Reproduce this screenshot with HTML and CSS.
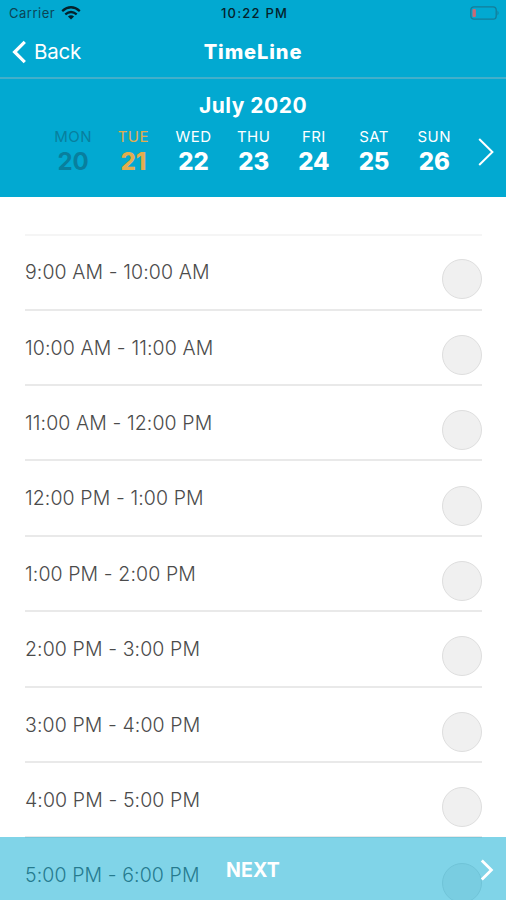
FILE: index.html
```html
<!DOCTYPE html>
<html lang="en">
<head>
<meta charset="utf-8">
<title>TimeLine</title>
<link rel="stylesheet" href="styles.css">
</head>
<body>
<div class="screen">
  <div class="status">
    <div class="carrier"><span class="carrier-name">Carrier</span>
      <svg width="20" height="14" viewBox="0 0 20 14" fill="none" stroke="#05222b" stroke-width="2.3"><path d="M1.2 5.1Q10-2.5 18.8 5.1M4.3 8.3Q10 3.6 15.7 8.3"/><path d="M6.9 10.4Q10 8 13.1 10.4L10 13.4Z" fill="#05222b" stroke="none"/></svg>
    </div>
    <span class="clock">10:22 PM</span>
    <svg class="battery" width="30" height="14" viewBox="0 0 30 14"><rect x=".8" y=".8" width="25.4" height="12.4" rx="3.2" fill="none" stroke="#147d99" stroke-width="1.3"/><path d="M27.5 4.5Q29.7 7 27.5 9.5Z" fill="#147d99"/><rect x="2.5" y="3" width="3.4" height="8" rx="1" fill="#c96a76"/></svg>
  </div>
  <header class="nav">
    <div class="back"><svg width="15" height="24" viewBox="0 0 15 24" fill="none" stroke="#fff" stroke-width="3.2"><path d="M12.8 1.8 2.6 12 12.8 22.2"/></svg><span>Back</span></div>
    <h1>TimeLine</h1>
  </header>
  <section class="calendar">
    <h2>July 2020</h2>
    <div class="week">
      <div class="day past"><span>MON</span><b>20</b></div>
      <div class="day today"><span>TUE</span><b>21</b></div>
      <div class="day"><span>WED</span><b>22</b></div>
      <div class="day"><span>THU</span><b>23</b></div>
      <div class="day"><span>FRI</span><b>24</b></div>
      <div class="day"><span>SAT</span><b>25</b></div>
      <div class="day"><span>SUN</span><b>26</b></div>
      <svg class="next-week" width="16" height="28" viewBox="0 0 16 28" fill="none" stroke="#fff" stroke-width="2"><path d="M1.2 1 14.4 14 1.2 27"/></svg>
    </div>
  </section>
  <main class="slots">
    <div class="slot"><span>9:00 AM - 10:00 AM</span><i></i></div>
    <div class="slot"><span>10:00 AM - 11:00 AM</span><i></i></div>
    <div class="slot"><span>11:00 AM - 12:00 PM</span><i></i></div>
    <div class="slot"><span>12:00 PM - 1:00 PM</span><i></i></div>
    <div class="slot"><span>1:00 PM - 2:00 PM</span><i></i></div>
    <div class="slot"><span>2:00 PM - 3:00 PM</span><i></i></div>
    <div class="slot"><span>3:00 PM - 4:00 PM</span><i></i></div>
    <div class="slot"><span>4:00 PM - 5:00 PM</span><i></i></div>
    <div class="slot"><span>5:00 PM - 6:00 PM</span><i></i></div>
  </main>
  <footer class="next"><span>NEXT</span>
    <svg width="14" height="22" viewBox="0 0 14 22" fill="none" stroke="#fff" stroke-width="2.8"><path d="M1.8 1.5 11.4 11 1.8 20.5"/></svg>
  </footer>
</div>
</body>
</html>
```
FILE: styles.css
```css
* { box-sizing: border-box; }
body { margin: 0; font-family: Inter, "Liberation Sans", sans-serif; background: #fff; }
.screen { position: relative; width: 506px; height: 900px; overflow: hidden; display: flex; flex-direction: column; }
svg { display: block; flex: none; }
.status { height: 26px; flex: none; background: #02a9d1; display: grid; grid-template-columns: 1fr auto 1fr; align-items: center; padding: 0 6px 0 9px; color: #05222b; font-size: 13px; }
.carrier { display: flex; align-items: center; gap: 6px; }
.carrier-name { letter-spacing: .5px; color: #0b4556; }
.clock { font-weight: 500; letter-spacing: 1.2px; }
.battery { justify-self: end; }
.nav { height: 53px; flex: none; background: #02a9d1; border-bottom: 2px solid #43afca; display: grid; grid-template-columns: 1fr auto 1fr; align-items: center; padding: 0 12px; color: #fff; }
.back { display: flex; align-items: center; gap: 7px; font-size: 20.5px; letter-spacing: -.2px; }
.nav h1 { margin: 0; font-size: 20px; font-weight: 800; letter-spacing: .9px; }
.calendar { height: 118px; flex: none; background: #02a9d1; color: #fff; padding-top: 13px; }
.calendar h2 { margin: 0; text-align: center; font-size: 21px; line-height: 27px; font-weight: 700; letter-spacing: .5px; }
.week { display: flex; align-items: center; padding-left: 43px; margin-top: 8px; }
.day { width: 60.2px; display: flex; flex-direction: column; align-items: center; }
.day span { font-size: 15px; line-height: 20px; letter-spacing: .45px; }
.day b { font-size: 24px; line-height: 29px; font-weight: 800; letter-spacing: -.1px; }
.past { color: #087f9e; }
.past b { font-weight: 700; }
.today { color: #e3ad4e; }
.next-week { margin: 0 0 0 13.5px; }
.slots { margin: 37px 24px 0 25px; border-top: 2px solid #f5f5f5; }
.slot { height: 75.4px; display: flex; justify-content: space-between; align-items: flex-start; border-bottom: 2px solid #e9e9e9; color: #4b4b4b; }
.slot:first-child { height: 74.6px; }
.slot:first-child span { margin-top: 24px; }
.slot:first-child i { margin-top: 23.4px; }
.slot span { font-size: 19.5px; line-height: 24px; font-weight: 300; letter-spacing: .1px; margin-top: 25px; white-space: nowrap; }
.slot i { width: 40px; height: 40px; border-radius: 50%; background: #f0f0f0; border: 1px solid #dedede; margin-top: 24.2px; }
.next { position: absolute; left: 0; right: 0; bottom: 0; height: 63px; background: rgba(2, 169, 209, .5); color: #fff; display: grid; grid-template-columns: 1fr auto 1fr; align-items: center; padding: 2px 12px 0; }
.next span { grid-column: 2; font-size: 19.5px; font-weight: 700; letter-spacing: .2px; }
.next svg { justify-self: end; }
```
